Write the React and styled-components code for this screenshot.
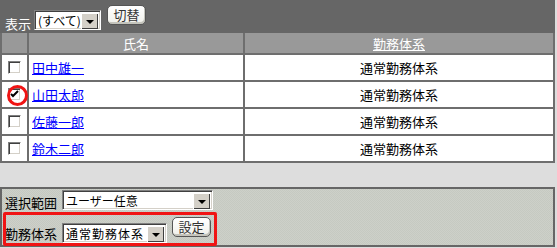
import React from 'react'
import styled, { createGlobalStyle } from 'styled-components';

const GlobalStyle = createGlobalStyle`
    body {
        margin: 0;
        background: #dddddd;
        font-family: "Noto Sans CJK JP", "Liberation Sans", sans-serif;
        font-size: 13px;
    }
`

const Page = styled.div`
    width: 555px;
`

const TopBar = styled.div`
    height: 33px;
    background: #666666;
    display: flex;
    align-items: flex-start;
    padding-left: 5px;
    box-sizing: border-box;
`

const Label = styled.span`
    font-size: 13px;
    line-height: 15px;
    color: ${p => p.$light ? '#fff' : '#000'};
    margin-top: ${p => p.$mt || 0}px;
    margin-right: ${p => p.$gap || 4}px;
    white-space: nowrap;
`

const SelectBox = styled.div`
    display: flex;
    width: ${p => p.$w}px;
    height: 20px;
    box-sizing: border-box;
    border: 1px solid;
    border-color: #808080 #ffffff #ffffff #808080;
    box-shadow: inset 1px 1px 0 #404040, inset -1px -1px 0 #d4d0c8;
    background: #fff;
    padding: 2px;
    margin-top: ${p => p.$mt || 0}px;
`

const SelectText = styled.span`
    flex: 1;
    min-width: 0;
    font-size: 12px;
    line-height: 16px;
    letter-spacing: ${p => p.$ls || 0}px;
    padding-left: 1px;
    white-space: nowrap;
    color: #000;
`

const SelectArrow = styled.span`
    flex: none;
    width: 17px;
    height: 16px;
    box-sizing: border-box;
    background: #d4d0c8;
    box-shadow: inset 1px 1px 0 #ffffff, inset -1px -1px 0 #404040;
    display: flex;
    align-items: center;
    justify-content: center;
    &::before {
        content: '';
        border-left: 4px solid transparent;
        border-right: 4px solid transparent;
        border-top: 4px solid #000;
        margin-top: 1px;
    }
`

const Button = styled.button`
    font-family: inherit;
    font-size: 13px;
    line-height: 16px;
    width: ${p => p.$w}px;
    height: 20px;
    padding: 0;
    box-sizing: border-box;
    border: 1px solid #555;
    border-radius: 5px;
    background: linear-gradient(#ffffff, #f0f0ea);
    box-shadow: inset -1px -2px 0 #c4c4bc;
    color: #333;
    margin-top: ${p => p.$mt || 0}px;
    margin-left: ${p => p.$ml || 0}px;
`

const Table = styled.div`
    border-left: 2px solid #6e6e6e;
    border-right: 2px solid #6e6e6e;
    box-sizing: border-box;
`

const Row = styled.div`
    display: grid;
    grid-template-columns: 27px 216px 1fr;
    height: ${p => p.$head ? 22 : 27}px;
    box-sizing: border-box;
    border-bottom: 2px solid #6e6e6e;
    background: ${p => p.$head ? '#999999' : '#ffffff'};
    color: ${p => p.$head ? '#fff' : '#000'};
`

const Cell = styled.div`
    position: relative;
    display: flex;
    align-items: center;
    justify-content: ${p => p.$left ? 'flex-start' : 'center'};
    padding-left: ${p => p.$left ? 3 : 0}px;
    border-right: ${p => p.$last ? 'none' : '2px solid #6e6e6e'};
    font-size: 13px;
    line-height: 15px;
    white-space: nowrap;
`

const HeadLink = styled.span`
    text-decoration: underline;
`

const NameLink = styled.a`
    color: #0000ff;
    text-decoration: underline;
`

const Check = styled.span`
    width: 13px;
    height: 13px;
    box-sizing: border-box;
    border: 1px solid;
    border-color: #808080 #ffffff #ffffff #808080;
    box-shadow: inset 1px 1px 0 #404040, inset -1px -1px 0 #d4d0c8;
    background: #fff;
    display: flex;
    align-items: center;
    justify-content: center;
`

const Circle = styled.span`
    position: absolute;
    left: 5px;
    top: 3px;
    width: 21px;
    height: 21px;
    box-sizing: border-box;
    border: 3px solid #f01414;
    border-radius: 50%;
`

const Panel = styled.div`
    margin-top: 24px;
    height: 60px;
    box-sizing: border-box;
    border: 2px solid #666;
    background: repeating-conic-gradient(#c5c9c1 0 25%, #cdd0c9 0 50%) 0 0 / 2px 2px;
    padding: 1px 0 0 3px;
`

const PanelRow = styled.div`
    position: relative;
    display: flex;
    align-items: flex-start;
    height: ${p => p.$h}px;
    ${p => p.$marked && `
        &::after {
            content: '';
            position: absolute;
            left: -2px;
            top: 1px;
            width: 214px;
            height: 34px;
            box-sizing: border-box;
            border: 3px solid #f01414;
            border-radius: 2px;
        }
    `}
`

const rows = [
    { name: '田中雄一', checked: false },
    { name: '山田太郎', checked: true },
    { name: '佐藤一郎', checked: false },
    { name: '鈴木二郎', checked: false },
]

const Select = ({ w, mt, ls, children }) => (
    <SelectBox $w={w} $mt={mt}>
        <SelectText $ls={ls}>{children}</SelectText>
        <SelectArrow />
    </SelectBox>
)

const App = () => {
    return (
        <Page>
            <GlobalStyle />
            <TopBar>
                <Label $light $mt={16} $gap={3}>表示</Label>
                <Select w={67} mt={10}>(すべて)</Select>
                <Button $w={39} $mt={5} $ml={6}>切替</Button>
            </TopBar>
            <Table>
                <Row $head>
                    <Cell />
                    <Cell>氏名</Cell>
                    <Cell $last><HeadLink>勤務体系</HeadLink></Cell>
                </Row>
                {rows.map(r => (
                    <Row key={r.name}>
                        <Cell>
                            <Check>
                                {r.checked && (
                                    <svg width="9" height="9" viewBox="0 0 9 9">
                                        <path d="M1 4 L3 6 L8 1" stroke="#000" strokeWidth="2" fill="none" />
                                    </svg>
                                )}
                            </Check>
                            {r.checked && <Circle />}
                        </Cell>
                        <Cell $left><NameLink href="#">{r.name}</NameLink></Cell>
                        <Cell $last>通常勤務体系</Cell>
                    </Row>
                ))}
            </Table>
            <Panel>
                <PanelRow $h={21}>
                    <Label $mt={5} $gap={5}>選択範囲</Label>
                    <Select w={151}>ユーザー任意</Select>
                </PanelRow>
                <PanelRow $h={34} $marked>
                    <Label $mt={15} $gap={5}>勤務体系</Label>
                    <Select w={105} mt={12} ls={1}>通常勤務体系</Select>
                    <Button $w={39} $mt={6} $ml={5}>設定</Button>
                </PanelRow>
            </Panel>
        </Page>
    )
}

export default App
